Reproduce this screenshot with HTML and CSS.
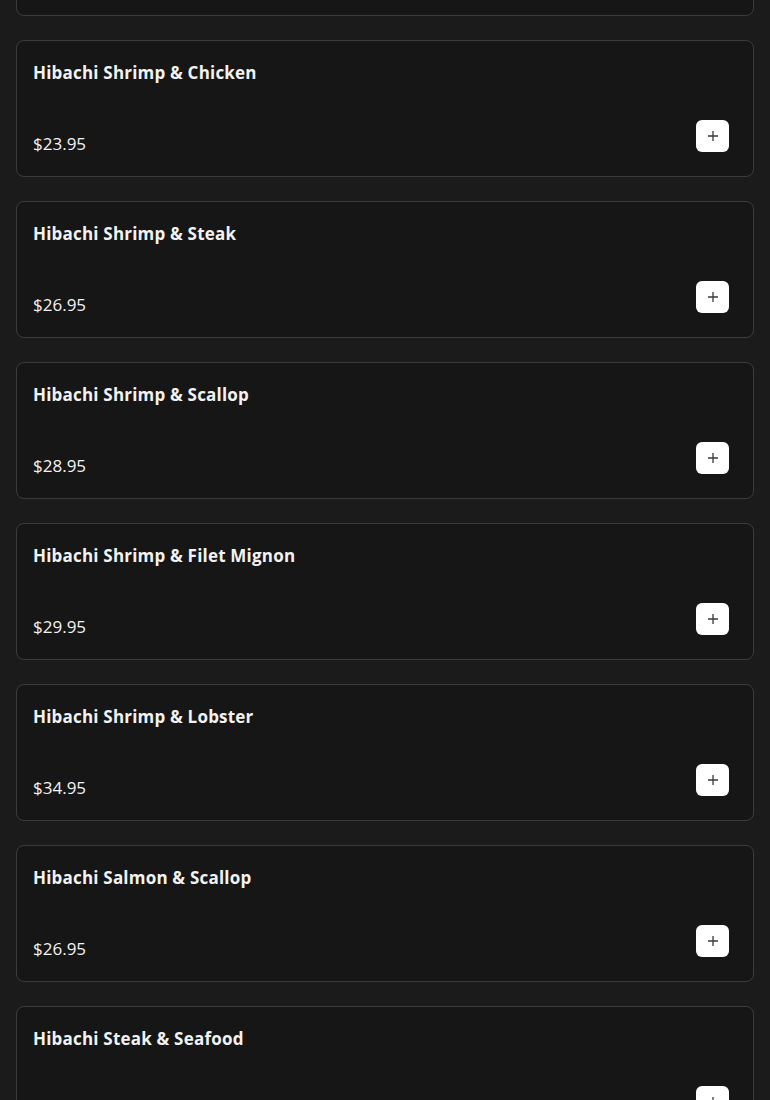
FILE: index.html
```html
<!DOCTYPE html>
<html lang="en">
  <head>
    <meta charset="UTF-8" />
    <meta name="viewport" content="width=device-width, initial-scale=1.0" />
    <title>Hibachi Menu</title>
    <link rel="stylesheet" href="styles.css">
  </head>
  <body>
    <div class="menu-list">
      <div class="menu-item">
        <h3 class="item-name">Hibachi Chicken &amp; Steak</h3>
        <div class="item-footer">
          <span class="item-price">$22.95</span>
          <button class="add-btn" aria-label="Add">
            <svg width="12" height="12" viewBox="0 0 12 12"><path d="M6 1v10M1 6h10" stroke="#3a3a3a" stroke-width="1.3" /></svg>
          </button>
        </div>
      </div>

      <div class="menu-item">
        <h3 class="item-name">Hibachi Shrimp &amp; Chicken</h3>
        <div class="item-footer">
          <span class="item-price">$23.95</span>
          <button class="add-btn" aria-label="Add">
            <svg width="12" height="12" viewBox="0 0 12 12"><path d="M6 1v10M1 6h10" stroke="#3a3a3a" stroke-width="1.3" /></svg>
          </button>
        </div>
      </div>

      <div class="menu-item">
        <h3 class="item-name">Hibachi Shrimp &amp; Steak</h3>
        <div class="item-footer">
          <span class="item-price">$26.95</span>
          <button class="add-btn" aria-label="Add">
            <svg width="12" height="12" viewBox="0 0 12 12"><path d="M6 1v10M1 6h10" stroke="#3a3a3a" stroke-width="1.3" /></svg>
          </button>
        </div>
      </div>

      <div class="menu-item">
        <h3 class="item-name">Hibachi Shrimp &amp; Scallop</h3>
        <div class="item-footer">
          <span class="item-price">$28.95</span>
          <button class="add-btn" aria-label="Add">
            <svg width="12" height="12" viewBox="0 0 12 12"><path d="M6 1v10M1 6h10" stroke="#3a3a3a" stroke-width="1.3" /></svg>
          </button>
        </div>
      </div>

      <div class="menu-item">
        <h3 class="item-name">Hibachi Shrimp &amp; Filet Mignon</h3>
        <div class="item-footer">
          <span class="item-price">$29.95</span>
          <button class="add-btn" aria-label="Add">
            <svg width="12" height="12" viewBox="0 0 12 12"><path d="M6 1v10M1 6h10" stroke="#3a3a3a" stroke-width="1.3" /></svg>
          </button>
        </div>
      </div>

      <div class="menu-item">
        <h3 class="item-name">Hibachi Shrimp &amp; Lobster</h3>
        <div class="item-footer">
          <span class="item-price">$34.95</span>
          <button class="add-btn" aria-label="Add">
            <svg width="12" height="12" viewBox="0 0 12 12"><path d="M6 1v10M1 6h10" stroke="#3a3a3a" stroke-width="1.3" /></svg>
          </button>
        </div>
      </div>

      <div class="menu-item">
        <h3 class="item-name">Hibachi Salmon &amp; Scallop</h3>
        <div class="item-footer">
          <span class="item-price">$26.95</span>
          <button class="add-btn" aria-label="Add">
            <svg width="12" height="12" viewBox="0 0 12 12"><path d="M6 1v10M1 6h10" stroke="#3a3a3a" stroke-width="1.3" /></svg>
          </button>
        </div>
      </div>

      <div class="menu-item">
        <h3 class="item-name">Hibachi Steak &amp; Seafood</h3>
        <div class="item-footer">
          <span class="item-price">$31.95</span>
          <button class="add-btn" aria-label="Add">
            <svg width="12" height="12" viewBox="0 0 12 12"><path d="M6 1v10M1 6h10" stroke="#3a3a3a" stroke-width="1.3" /></svg>
          </button>
        </div>
      </div>
    </div>
  </body>
</html>
```

FILE: styles.css
```css
body {
  font-family: "Open Sans", "Liberation Sans", sans-serif;
  background-color: #1b1b1b;
  color: #f2f2f2;
  margin: 0;
}

.menu-list {
  display: flex;
  flex-direction: column;
  gap: 24px;
  padding: 0 16px;
  margin-top: -121px;
}

.menu-item {
  display: flex;
  flex-direction: column;
  background-color: #161616;
  border: 1px solid #3c3c3c;
  border-radius: 8px;
  padding: 20px 24px 24px 16px;
}

.item-name {
  margin: 0;
  font-size: 17px;
  font-weight: 700;
  line-height: 24px;
  letter-spacing: 0.2px;
}

.item-footer {
  display: flex;
  justify-content: space-between;
  align-items: flex-end;
  margin-top: 35px;
}

.item-price {
  font-size: 17px;
  line-height: 22px;
  margin-bottom: -3px;
}

.add-btn {
  width: 33px;
  height: 32px;
  border: none;
  border-radius: 6px;
  background-color: #fff;
  padding: 0;
  display: flex;
  align-items: center;
  justify-content: center;
  cursor: pointer;
}
```
